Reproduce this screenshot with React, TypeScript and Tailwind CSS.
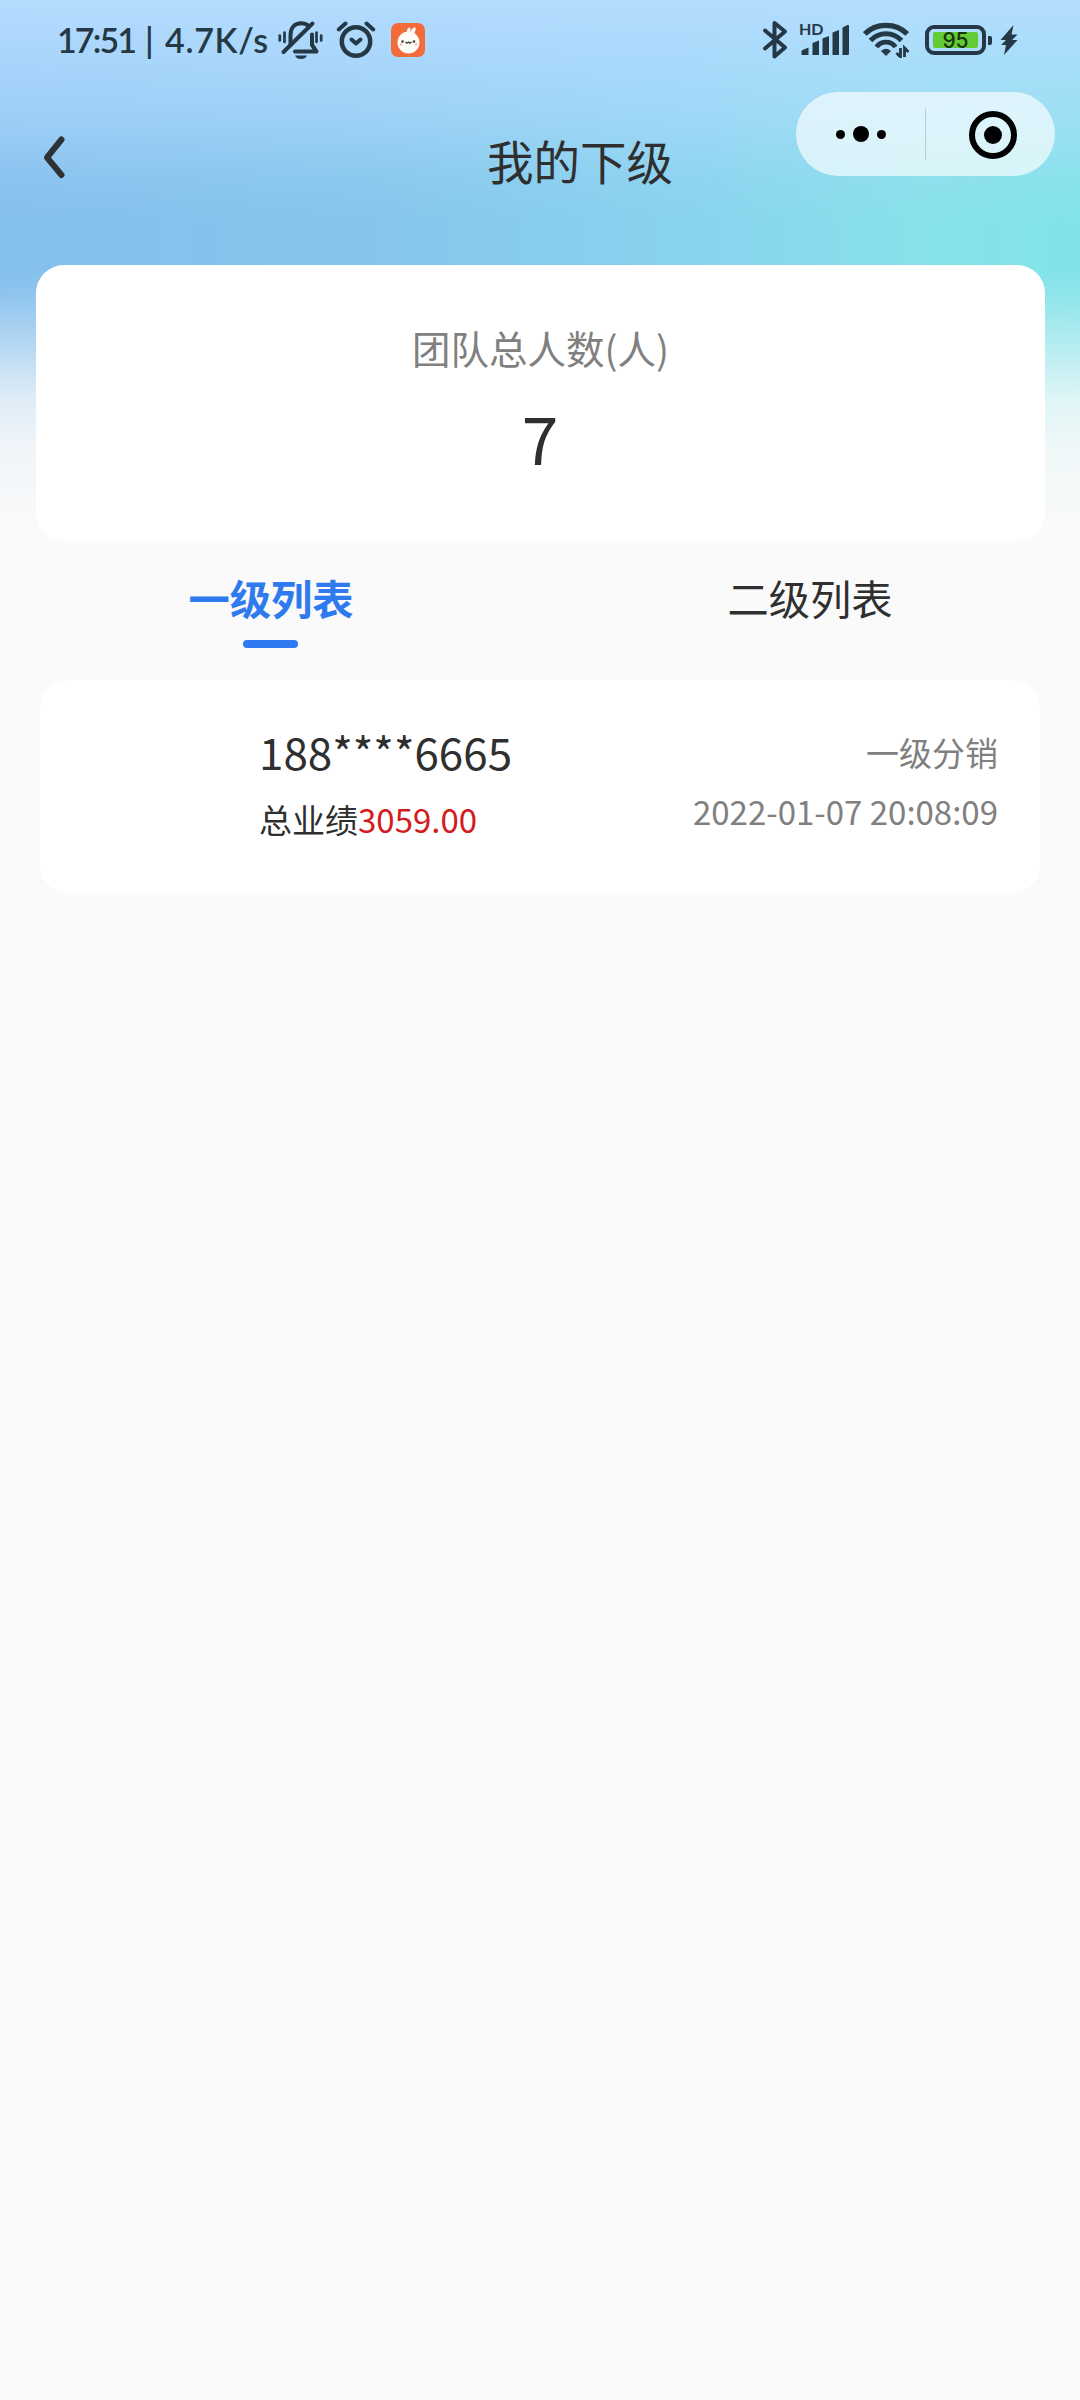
const ink = "#253846";

function MutedBell() {
  return (
    <svg className="h-[40px] w-[46px]" viewBox="0 0 46 40" fill="none" stroke={ink} strokeLinecap="round" strokeLinejoin="round">
      <path d="M12.500 25V15.500C12.500 7.500 17 3.300 23 3.300c3.500 0 6 1 7.700 3M34 14.500v10.500l4.500 6.500H17" strokeWidth="4" />
      <path d="M5.500 32L34.500 3.500" strokeWidth="4" />
      <path d="M1.800 15.500v5M6.500 12.500v9.500M38.500 12.500v9.500M43.200 15.500v5" strokeWidth="2.700" />
      <path d="M17 35.500h12c-1 2.500-3 3.500-6 3.500s-5-1-6-3.500z" fill={ink} stroke="none" />
    </svg>
  );
}

function AlarmClock() {
  return (
    <svg className="h-[38px] w-[40px]" viewBox="0 0 40 38" fill="none" stroke={ink} strokeLinecap="round" strokeLinejoin="round">
      <circle cx="20" cy="20.500" r="14.200" strokeWidth="4.500" />
      <path d="M2.800 8.500L9.500 2.500M37.200 8.500L30.500 2.500" strokeWidth="4" />
      <path d="M15.500 18.500L20 22.500l4.500-4" strokeWidth="4" />
    </svg>
  );
}

function RabbitBadge() {
  return (
    <svg className="h-[34px] w-[34px]" viewBox="0 0 34 34">
      <rect width="34" height="34" rx="7" fill="#f26b3a" />
      <path d="M16 11C15.500 7 17 4 18.500 4.500s1 3 1 5.500C20 7 22 4 24 4.500s0 4-1.500 7z" fill="#fff" />
      <circle cx="17.500" cy="19.500" r="11" fill="#fffdf8" />
      <circle cx="11.500" cy="18.500" r="1.200" fill="#333" />
      <circle cx="23" cy="18.500" r="1.200" fill="#333" />
      <path d="M14.500 19l1.500 1.200 1.500-1.200 1.500 1.200 1.500-1.200" fill="none" stroke="#333" strokeWidth="1.200" />
      <circle cx="10" cy="21.500" r="1.300" fill="#f8b9a0" />
      <circle cx="25" cy="21.500" r="1.300" fill="#f8b9a0" />
    </svg>
  );
}

function Bluetooth() {
  return (
    <svg className="h-[40px] w-[26px]" viewBox="0 0 26 40" fill="none" stroke={ink} strokeWidth="4" strokeLinecap="round" strokeLinejoin="round">
      <path d="M3 10.500L23 27.500 12.500 36.500V3L23 11.500 3 28.500" />
    </svg>
  );
}

function Signal() {
  return (
    <div className="relative h-[34px] w-[51px]">
      <span className="absolute -top-[2px] left-0 text-[16px] leading-[16px] font-bold text-[#253846] [font-family:Lato,sans-serif]">HD</span>
      <svg className="h-[34px] w-[51px]" viewBox="0 0 51 34" fill={ink}>
        <path d="M2.500 31.500v-3q0-1 1-1.500l6-2.500v7.500H3q-.500 0-.500-.500zM13.500 20l6.500-2.500V32h-6.500zM23.500 15.500l6.500-2.500v19h-6.500zM33.500 9.500L40 7v25h-6.500zM43.500 4.500l5-2.500q1.500-.500 1.500 1v27.500q0 1.500-1.500 1.500h-5z" />
      </svg>
    </div>
  );
}

function Wifi() {
  return (
    <svg className="h-[36px] w-[46px]" viewBox="0 0 46 36" fill="none" stroke={ink}>
      <path d="M1.800 12C13 .500 33 .500 44.200 12" strokeWidth="5.200" />
      <path d="M7.500 18.500C16 9.500 30 9.500 38.500 18.500" strokeWidth="5" />
      <path d="M13.500 25C18 18.500 28 18.500 32.500 25" strokeWidth="4.800" />
      <path d="M23 33.500l-4.500-4.500q4.500-3.500 9 0z" fill={ink} />
      <path d="M37.500 26v9l-4-4M41.500 35v-9l4 4" strokeWidth="2.800" />
    </svg>
  );
}

function Battery() {
  return (
    <div className="flex items-center gap-[2px]">
      <div className="h-[30px] w-[61px] rounded-[9px] border-4 border-[#253846] px-[4px] py-[3px]">
        <div className="flex h-full items-center justify-center rounded-[2px] bg-[#63cb36] text-[21px] leading-none font-medium text-[#193510] [font-family:Inter,sans-serif]">
          95
        </div>
      </div>
      <div className="h-[9px] w-[4px] rounded-r-[2px] bg-[#253846]" />
    </div>
  );
}

function StatusBar() {
  return (
    <div className="flex h-[80px] items-center">
      <div className="ml-[57px] flex w-[221px] text-[34px] leading-[40px] font-semibold whitespace-nowrap text-[#253846] [font-family:Lato,sans-serif]">
        <span className="w-[88px] tracking-[-1.900px]">17:51</span>
        <span className="w-[20px]">|</span>
        <span className="tracking-[0.700px]">4.7K/s</span>
      </div>
      <MutedBell />
      <div className="ml-[12px]"><AlarmClock /></div>
      <div className="ml-[15px]"><RabbitBadge /></div>
      <div className="ml-auto flex items-center pr-[62px]">
        <Bluetooth />
        <div className="ml-[11px]"><Signal /></div>
        <div className="ml-[13px]"><Wifi /></div>
        <div className="ml-[16px]"><Battery /></div>
        <svg className="ml-[8px] h-[30px] w-[18px]" viewBox="0 0 18 30" fill={ink}>
          <path d="M13.500 0L.500 15h5.500L1 20h5L4 30 17.500 15h-5.500l5.500-5.500h-6z" />
        </svg>
      </div>
    </div>
  );
}

function Capsule() {
  return (
    <div className="absolute top-[92px] right-[25px] flex h-[84px] w-[259px] items-center rounded-full bg-white/65">
      <div className="flex w-[129px] items-center justify-center gap-[8px]">
        <span className="size-[9px] rounded-full bg-black" />
        <span className="size-[16px] rounded-full bg-black" />
        <span className="size-[9px] rounded-full bg-black" />
      </div>
      <div className="h-[52px] w-px bg-[#bccdd6]" />
      <div className="flex flex-1 items-center justify-center pt-[2px] pl-[4px]">
        <div className="flex size-[48px] items-center justify-center rounded-full border-[6px] border-black">
          <span className="size-[18px] rounded-full bg-black" />
        </div>
      </div>
    </div>
  );
}

export default function App() {
  return (
    <div className="relative h-[2400px] w-[1080px] overflow-hidden bg-[#fafafa] text-[#2f2f2f] [font-family:'Noto_Sans_CJK_SC',sans-serif]">
      <div className="absolute inset-x-0 top-0 h-[550px] bg-[linear-gradient(90deg,#85bfed_0%,#86c6eb_35%,#88d4ee_65%,#88e1ea_85%,#83e3e9_100%)]" />
      <div className="absolute inset-x-0 top-0 h-[550px] bg-[linear-gradient(180deg,#b4dcff_0px,#b4dcffc0_60px,#b4dcff80_120px,#b4dcff20_180px,#b4dcff00_220px,#fafafa00_270px,#fafafa18_295px,#fafafa48_325px,#fafafa80_358px,#fafafac6_400px,#fafafaea_450px,#fafafa_530px)]" />
      <div className="relative">
        <StatusBar />
        <header className="relative flex h-[185px]">
          <svg className="mt-[53px] ml-[41px] h-[48px] w-[26px]" viewBox="0 0 26 48" fill="none" stroke="#2d3236" strokeWidth="6" strokeLinecap="round" strokeLinejoin="round">
            <path d="M20.500 6.500L6 24.500 20.500 42" />
          </svg>
          <h1 className="mt-[46px] ml-[420px] text-[46.500px] leading-[68px] whitespace-nowrap">我的下级</h1>
        </header>
        <Capsule />
        <section className="mx-auto flex h-[276px] w-[1009px] flex-col items-center rounded-[28px] bg-white">
          <p className="mt-[54px] ml-[1px] text-[38.500px] leading-[56px] text-[#808080]">团队总人数(人)</p>
          <p className="mt-[13px] text-[66px] leading-[96px]">7</p>
        </section>
        <nav className="grid h-[139px] grid-cols-2 text-[41.300px] leading-[60px]">
          <div className="flex flex-col items-center pt-[26px] font-bold text-[#2f7aee]">
            <span className="ml-[2px]">一级列表</span>
            <span className="mt-[13px] h-[8px] w-[55px] rounded-full bg-[#2f7af3]" />
          </div>
          <div className="flex flex-col items-center pt-[26px]">二级列表</div>
        </nav>
        <section className="mx-auto flex h-[213px] w-[1000px] justify-between rounded-[28px] bg-white pr-[42px] pl-[219px]">
          <div className="pt-[39px]">
            <p className="text-[44px] leading-[64px]">188****6665</p>
            <p className="mt-[12px] text-[33px] leading-[48px]">
              总业绩<span className="text-[#d31b20]">3059.00</span>
            </p>
          </div>
          <div className="pt-[48px] text-right text-[33px] leading-[48px] text-[#808080]">
            <p>一级分销</p>
            <p className="mt-[11px]">2022-01-07 20:08:09</p>
          </div>
        </section>
      </div>
    </div>
  );
}
